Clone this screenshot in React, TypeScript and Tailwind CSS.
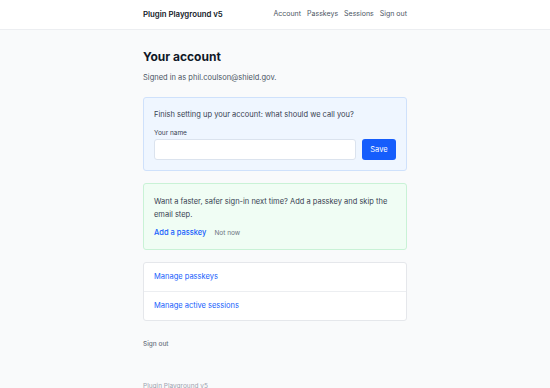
import React from "react";

function Header() {
  const links = ["Account", "Passkeys", "Sessions", "Sign out"];
  return (
    <header className="h-[30px] border-b border-[#eceef1] bg-white">
      <div className="mx-auto flex h-full w-[264px] items-center justify-between">
        <span className="text-[7.8px] font-semibold text-[#111827]">Plugin Playground v5</span>
        <nav className="flex gap-[6px] text-[7px] text-[#4b5563]">
          {links.map((l) => (
            <a key={l} href="#">
              {l}
            </a>
          ))}
        </nav>
      </div>
    </header>
  );
}

export default function App() {
  return (
    <div
      className="min-h-[388px] bg-[#f9fafb] text-[#1f2937]"
      style={{ fontFamily: "Inter, 'Noto Sans', sans-serif" }}
    >
      <Header />
      <main className="mx-auto w-[264px] pt-[19px]">
        <h1 className="text-[12px] font-bold leading-[16px] text-[#111827]">Your account</h1>
        <p className="mt-[7px] text-[7.5px] leading-[12px] text-[#4b5563]">
          Signed in as phil.coulson@shield.gov.
        </p>

        {/* name prompt */}
        <div className="mt-[13px] rounded-[3px] border border-[#cfe1fb] bg-[#eff6ff] px-[10px] pt-[11px] pb-[10px]">
          <p className="text-[7.5px] leading-[12px] text-[#374151]">
            Finish setting up your account: what should we call you?
          </p>
          <label className="mt-[7px] block text-[6.5px] leading-[10px] text-[#374151]">Your name</label>
          <div className="mt-[1px] flex gap-[6px]">
            <input className="h-[21px] flex-1 rounded-[3px] border border-[#dbe3ee] bg-white px-2 text-[8px] outline-none" />
            <button className="h-[21px] w-[34px] rounded-[3px] bg-[#155dfc] text-[7.5px] text-white">Save</button>
          </div>
        </div>

        {/* passkey nudge */}
        <div className="mt-[12px] rounded-[3px] border border-[#c9f2d6] bg-[#f0fdf4] px-[10px] pt-[11px] pb-[10px]">
          <p className="text-[7.5px] leading-[13px] text-[#374151]">
            Want a faster, safer sign-in next time? Add a passkey and skip the email step.
          </p>
          <div className="mt-[6px] flex items-baseline gap-[8px]">
            <a href="#" className="text-[7.5px] font-medium text-[#155dfc]">Add a passkey</a>
            <span className="text-[6.5px] text-[#6b7280]">Not now</span>
          </div>
        </div>

        {/* links */}
        <div className="mt-[12px] rounded-[3px] border border-[#e5e7eb] bg-white">
          <a href="#" className="block border-b border-[#eceef1] px-[10px] py-[9px] text-[7.5px] leading-[10px] text-[#155dfc]">
            Manage passkeys
          </a>
          <a href="#" className="block px-[10px] py-[9px] text-[7.5px] leading-[10px] text-[#155dfc]">
            Manage active sessions
          </a>
        </div>

        <button className="mt-[18px] block text-[6.5px] font-medium leading-[10px] text-[#6b7280]">Sign out</button>

        <footer className="mt-[32px] text-[6.5px] leading-[10px] text-[#9ca3af]">Plugin Playground v5</footer>
      </main>
    </div>
  );
}
